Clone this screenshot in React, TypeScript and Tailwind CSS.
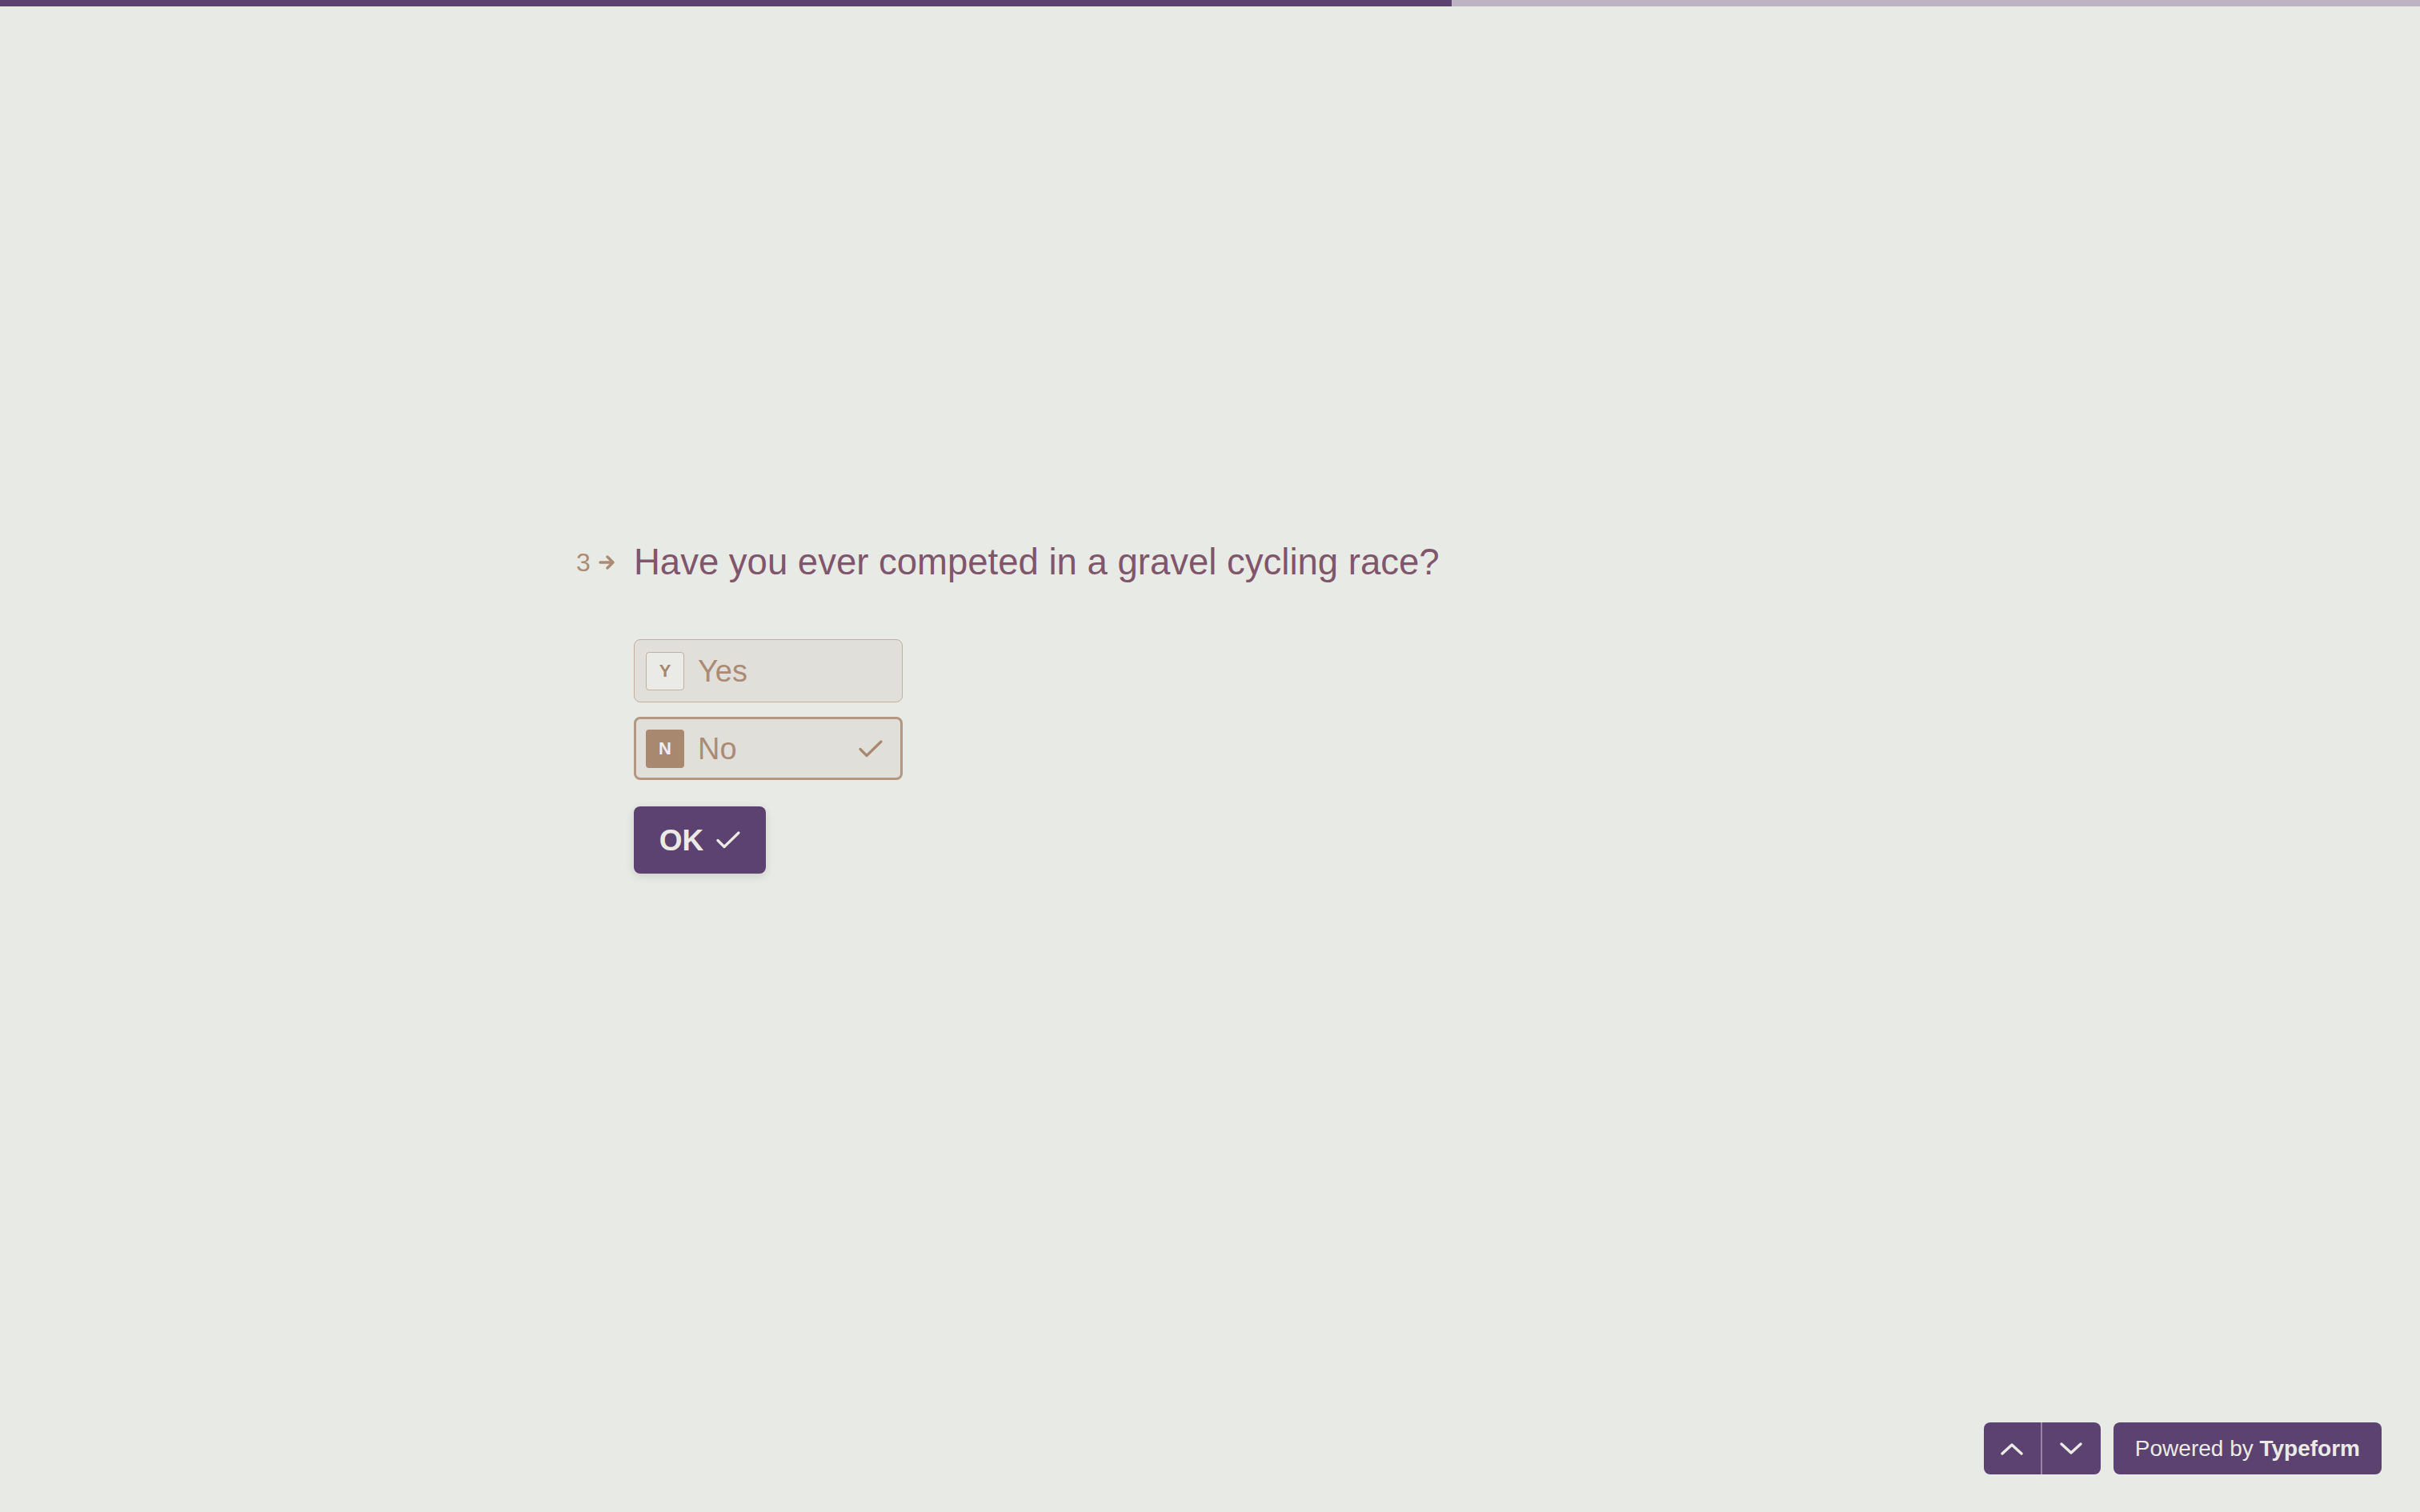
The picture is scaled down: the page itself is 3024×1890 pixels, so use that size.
import React from "react";

const sans = { fontFamily: '"Liberation Sans", Arial, sans-serif' };

function Check({ className, stroke }: { className: string; stroke: string }) {
  return (
    <svg className={className} viewBox="0 0 30 24" fill="none">
      <path d="M2 12.5L10 20.5L28 3" stroke={stroke} strokeWidth="3.2" strokeLinecap="round" strokeLinejoin="round" />
    </svg>
  );
}

function Chevron({ up }: { up?: boolean }) {
  return (
    <svg className="w-[28px] h-[16px]" viewBox="0 0 28 16" fill="none">
      <path
        d={up ? "M2 14L14 3L26 14" : "M2 2L14 13L26 2"}
        stroke="#ebebe6"
        strokeWidth="3.4"
        strokeLinecap="round"
        strokeLinejoin="round"
      />
    </svg>
  );
}

function Option({ letter, label, selected }: { letter: string; label: string; selected?: boolean }) {
  return (
    <div
      className={`flex items-center w-[336px] h-[79px] rounded-[8px] bg-[#e1dfda] px-[14px] ${
        selected ? "border-[3px] border-[#b39780]" : "border border-[#c6ae9b]"
      }`}
    >
      <span
        className={`flex items-center justify-center w-[48px] h-[48px] rounded-[4px] text-[22px] font-bold ${
          selected ? "bg-[#a98870] text-[#f1efeb] -ml-[2px]" : "bg-[#eaebe6] border border-[#c6ae9b] text-[#a8876e]"
        }`}
      >
        {letter}
      </span>
      <span className="ml-[17px] text-[38px] text-[#ab8b73] leading-none">{label}</span>
      {selected && <Check className="ml-auto mr-[8px] w-[30px] h-[24px]" stroke="#a98870" />}
    </div>
  );
}

export default function App() {
  return (
    <div className="flex flex-col w-full h-screen bg-[#e8eae5]" style={sans}>
      {/* progress */}
      <div className="flex w-full h-[8px] bg-[#bdb3c2] shrink-0">
        <div className="h-full w-[1814px] bg-[#5c4270]" />
      </div>

      <main className="flex-1 flex flex-col">
        <div className="w-[1440px] mx-auto pt-[663px]">
          {/* question */}
          <div className="flex items-start">
            <div className="flex items-center -ml-[72px] w-[72px] h-[64px]">
              <span className="text-[32px] leading-none text-[#ab8b73]">3</span>
              <svg className="ml-[10px] w-[22px] h-[20px]" viewBox="0 0 22 20" fill="none">
                <path d="M2 10H18M11 3L18 10L11 17" stroke="#ab8b73" strokeWidth="3.4" strokeLinecap="round" strokeLinejoin="round" />
              </svg>
            </div>
            <h1 className="text-[45.5px] leading-[64px] text-[#80566c]">
              Have you ever competed in a gravel cycling race?
            </h1>
          </div>

          {/* options */}
          <div className="flex flex-col gap-[18px] mt-[64px]">
            <Option letter="Y" label="Yes" />
            <Option letter="N" label="No" selected />
          </div>

          <button className="flex items-center justify-center gap-[16px] mt-[33px] w-[165px] h-[84px] rounded-[8px] bg-[#5c4270] shadow-[0_3px_12px_rgba(0,0,0,0.12)]">
            <span className="text-[37px] font-bold text-[#ebebe6] leading-none">OK</span>
            <Check className="w-[30px] h-[24px]" stroke="#ebebe6" />
          </button>
        </div>
      </main>

      {/* footer */}
      <footer className="flex justify-end gap-[16px] pr-[48px] pb-[47px] shrink-0">
        <div className="flex h-[65px] rounded-[8px] bg-[#5c4270] overflow-hidden">
          <button className="flex items-center justify-center w-[73px] h-full border-r-2 border-[#9a83a6]">
            <Chevron up />
          </button>
          <button className="flex items-center justify-center w-[73px] h-full">
            <Chevron />
          </button>
        </div>
        <div className="flex items-center h-[65px] px-[27px] rounded-[8px] bg-[#5c4270] text-[28px] text-[#ebebe6]">
          Powered by&nbsp;<span className="font-bold">Typeform</span>
        </div>
      </footer>
    </div>
  );
}
